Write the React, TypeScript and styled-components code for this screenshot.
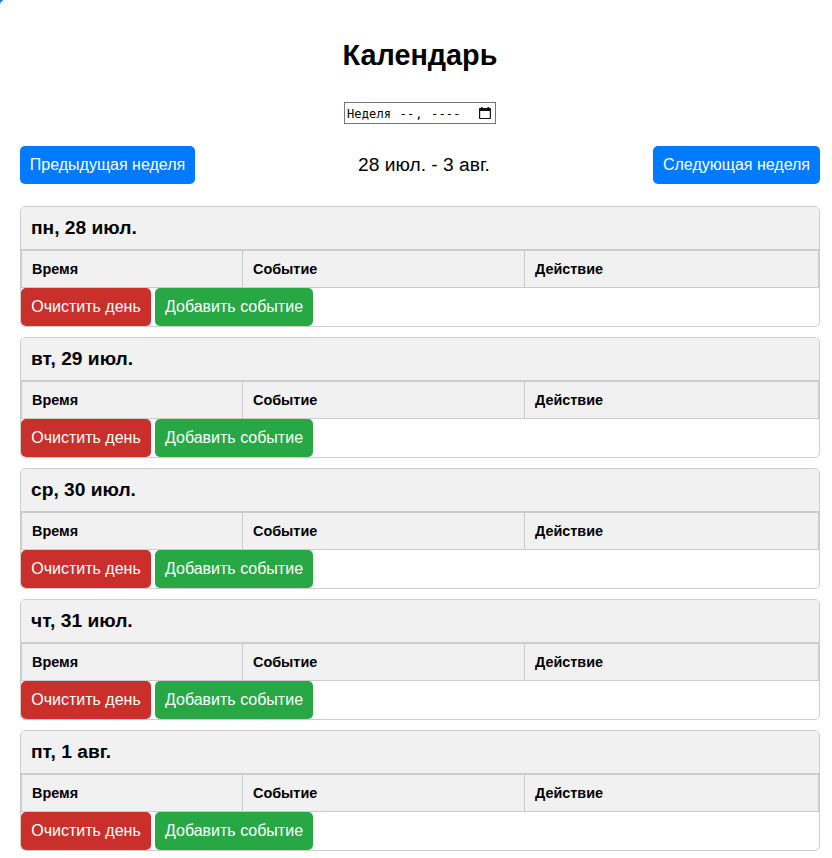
import React from "react";
import styled, { createGlobalStyle } from "styled-components";

const GlobalStyle = createGlobalStyle`
  *, *::before, *::after { box-sizing: border-box; }
  html { background: #007bff; }
  body {
    margin: 0;
    overflow: hidden;
    font-family: "Liberation Sans", Arial, sans-serif;
    color: #000;
  }
`;

const Page = styled.main`
  width: 840px;
  height: 880px;
  padding: 36px 20px 0;
  background: #fff;
  border-radius: 5px;
  overflow: hidden;
`;

const Title = styled.h1`
  margin: 0;
  height: 38px;
  line-height: 38px;
  font-size: 28.8px;
  font-weight: 700;
  text-align: center;
`;

const WeekField = styled.div`
  display: flex;
  align-items: center;
  justify-content: space-between;
  width: 152px;
  height: 22px;
  margin: 28px auto 22px;
  padding: 0 4px 0 2px;
  border: 1px solid #767676;
  font-family: "DejaVu Sans Mono", monospace;
  font-size: 12px;
  line-height: 20px;
  white-space: pre;
`;

const WeekText = styled.span`
  padding-top: 2px;
  letter-spacing: 0.14px;
`;

const WeekPart = styled.span`
  padding: 0 1px;
`;

const Navigation = styled.nav`
  display: flex;
  align-items: center;
  justify-content: space-between;
  margin-bottom: 22px;
`;

const Period = styled.span`
  font-size: 19.2px;
  line-height: 22px;
`;

const tones = { primary: "#007bff", danger: "#c9302c", success: "#28a745" };

const Button = styled.button<{ $tone: keyof typeof tones; $width: number }>`
  width: ${(p) => p.$width}px;
  height: 38px;
  padding: 0;
  border: 0;
  border-radius: 5px;
  background: ${(p) => tones[p.$tone]};
  color: #fff;
  font-family: inherit;
  font-size: 16px;
  white-space: nowrap;
`;

const DayCard = styled.section`
  margin-bottom: 10px;
  border: 1px solid #ccc;
  border-radius: 5px;
  overflow: hidden;
`;

const DayHeading = styled.h2`
  margin: 0;
  height: 43px;
  padding: 0 10px;
  border-bottom: 1px solid #ccc;
  background: #f1f1f1;
  font-size: 19.2px;
  line-height: 41px;
  font-weight: 700;
`;

const ColumnRow = styled.div`
  display: grid;
  grid-template-columns: 221px 282px 1fr;
  height: 38px;
  border: 1px solid #ccc;
  background: #f1f1f1;
`;

const ColumnName = styled.div`
  padding-left: 10px;
  border-right: 1px solid #ccc;
  font-size: 14.4px;
  font-weight: 700;
  line-height: 36px;

  &:last-child { border-right: 0; }
`;

const Actions = styled.div`
  display: flex;
  gap: 4px;
`;

const days = ["пн, 28 июл.", "вт, 29 июл.", "ср, 30 июл.", "чт, 31 июл.", "пт, 1 авг."];
const columns = ["Время", "Событие", "Действие"];

const CalendarIcon = () => (
  <svg width="12" height="13" viewBox="0 0 12 13" aria-hidden="true">
    <path d="M2 0h1.500v1h5V0H10v1h1.200q.8 0 .8.800v9.400q0 .8-.8.800H.8q-.8 0-.8-.8V1.800Q0 1 .8 1H2zM1.200 4v6.900h9.600V4z" fill="#111" fillRule="evenodd" />
  </svg>
);

export default function App() {
  return (
    <>
      <GlobalStyle />
      <Page>
        <Title>Календарь</Title>
        <WeekField>
          <WeekText>Неделя <WeekPart>--</WeekPart>, <WeekPart>----</WeekPart></WeekText>
          <CalendarIcon />
        </WeekField>
        <Navigation>
          <Button $tone="primary" $width={175}>Предыдущая неделя</Button>
          <Period>28 июл. - 3 авг.</Period>
          <Button $tone="primary" $width={167}>Следующая неделя</Button>
        </Navigation>
        {days.map((day) => (
          <DayCard key={day}>
            <DayHeading>{day}</DayHeading>
            <ColumnRow>
              {columns.map((name) => (
                <ColumnName key={name}>{name}</ColumnName>
              ))}
            </ColumnRow>
            <Actions>
              <Button $tone="danger" $width={130}>Очистить день</Button>
              <Button $tone="success" $width={158}>Добавить событие</Button>
            </Actions>
          </DayCard>
        ))}
      </Page>
    </>
  );
}
